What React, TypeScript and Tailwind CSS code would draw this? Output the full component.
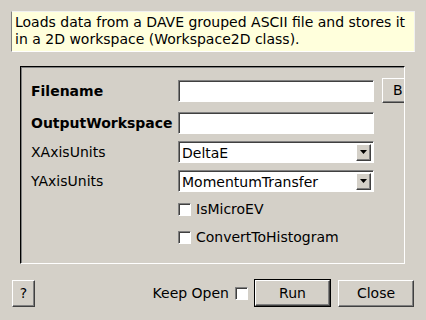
import React from 'react';

const font = { fontFamily: '"DejaVu Sans", "Liberation Sans", sans-serif' };

const Raised: React.FC<{ className?: string; children: React.ReactNode }> = ({ className = '', children }) => (
  <div
    className={`flex shrink-0 items-center justify-center bg-[#d4d0c8] border border-t-white border-l-white border-b-[#404040] border-r-[#404040] shadow-[inset_-1px_-1px_0_#808080] ${className}`}
  >
    {children}
  </div>
);

const TextBox: React.FC = () => (
  <div className="w-[196px] h-[22px] shrink-0 bg-white border border-t-[#808080] border-l-[#808080] border-b-white border-r-white shadow-[inset_1px_1px_0_#404040]" />
);

const Combo: React.FC<{ value: string }> = ({ value }) => (
  <div className="w-[196px] h-[22px] shrink-0 bg-white flex items-center border border-t-[#808080] border-l-[#808080] border-b-white border-r-white shadow-[inset_1px_1px_0_#404040] pl-[3px] pr-[2px] pt-px">
    <span className="flex-1 text-black leading-none">{value}</span>
    <Raised className="w-[15px] h-[17px] -mt-px">
      <svg width="7" height="4" viewBox="0 0 7 4">
        <path d="M0 0h7L3.5 4z" fill="#000" />
      </svg>
    </Raised>
  </div>
);

const Check: React.FC = () => (
  <div className="w-[13px] h-[13px] shrink-0 bg-white border border-t-[#808080] border-l-[#808080] border-b-white border-r-white shadow-[inset_1px_1px_0_#404040]" />
);

export default function App() {
  return (
    <div className="w-[426px] h-[320px] bg-[#d4d0c8] text-black text-[14px] overflow-hidden" style={font}>
      {/* description tooltip */}
      <div className="ml-[11px] mt-[11px] w-[404px] h-[41px] bg-[#ffffdc] border border-t-[#f0f0f0] border-l-[#808080] border-b-white border-r-[#f0f0f0] pl-[3px] pt-[2px] leading-[17px]">
        <div>Loads data from a DAVE grouped ASCII file and stores it</div>
        <div>in a 2D workspace (Workspace2D class).</div>
      </div>

      {/* property group */}
      <div className="ml-[20px] mt-[14px] w-[385px] h-[198px] border border-t-black border-l-black border-b-white border-r-white shadow-[inset_1px_1px_0_#808080] overflow-hidden pl-[10px] pt-[13px]">
        <div className="flex items-center h-[22px]">
          <span className="w-[147px] shrink-0 font-bold">Filename</span>
          <TextBox />
          {/* browse button runs past the group's edge and is clipped */}
          <Raised className="w-[40px] h-[25px] ml-[8px] -mt-[2px] !justify-start pl-[10px]">
            <span>B</span>
          </Raised>
        </div>
        <div className="flex items-center h-[22px] mt-[10px]">
          <span className="w-[147px] shrink-0 font-bold">OutputWorkspace</span>
          <TextBox />
        </div>
        <div className="flex items-center h-[22px] mt-[7px]">
          <span className="w-[147px] shrink-0">XAxisUnits</span>
          <Combo value="DeltaE" />
        </div>
        <div className="flex items-center h-[22px] mt-[7px]">
          <span className="w-[147px] shrink-0">YAxisUnits</span>
          <Combo value="MomentumTransfer" />
        </div>
        <div className="flex items-center h-[20px] mt-[7px] pl-[147px] gap-[5px]">
          <Check />
          <span>IsMicroEV</span>
        </div>
        <div className="flex items-center h-[20px] mt-[8px] pl-[147px] gap-[5px]">
          <Check />
          <span>ConvertToHistogram</span>
        </div>
      </div>

      {/* bottom buttons */}
      <div className="flex items-center mt-[15px] pl-[12px] h-[28px]">
        <Raised className="w-[23px] h-[27px]">?</Raised>
        <span className="ml-auto">Keep Open</span>
        <div className="ml-[6px]">
          <Check />
        </div>
        <div className="ml-[6px] border border-black">
          <Raised className="w-[75px] h-[26px]">Run</Raised>
        </div>
        <Raised className="w-[76px] h-[27px] ml-[7px] mr-[12px]">Close</Raised>
      </div>
    </div>
  );
}
